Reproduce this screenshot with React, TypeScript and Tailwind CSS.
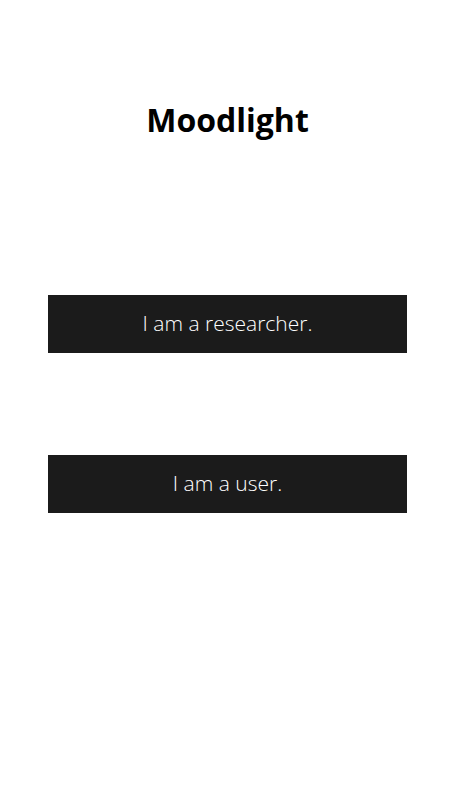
export default function App() {
  return (
    <div className="min-h-screen bg-white flex flex-col items-center px-12" style={{ fontFamily: '"Open Sans", sans-serif' }}>
      <h1 className="mt-[98px] text-[32px] leading-[44px] font-bold text-black">Moodlight</h1>
      <button className="mt-[153px] w-full h-[58px] bg-[#1b1b1b] text-white text-[21px] font-light">
        I am a researcher.
      </button>
      <button className="mt-[102px] w-full h-[58px] bg-[#1b1b1b] text-white text-[21px] font-light">
        I am a user.
      </button>
    </div>
  );
}
